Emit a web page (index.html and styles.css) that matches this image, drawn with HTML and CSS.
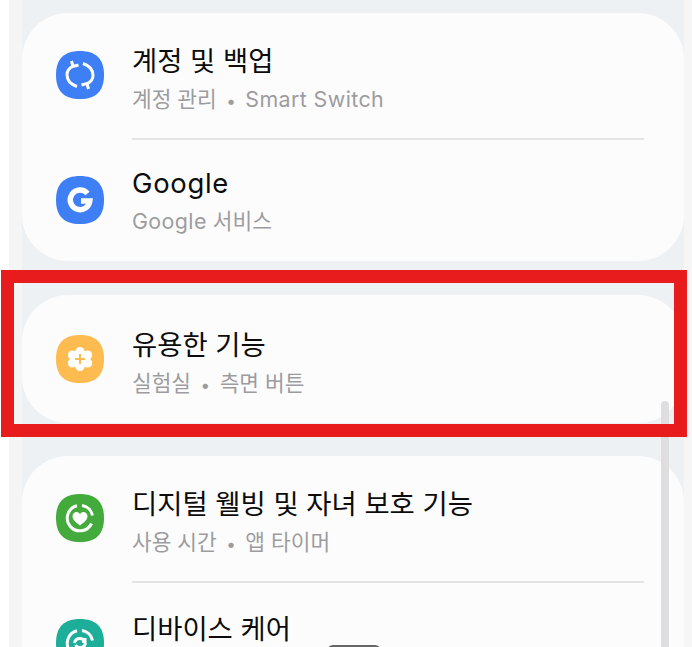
FILE: index.html
```html
<!DOCTYPE html>
<html lang="ko">

<head>
  <meta charset="UTF-8">
  <meta name="viewport" content="width=device-width, initial-scale=1.0">
  <title>설정</title>
  <link rel="stylesheet" href="styles.css">
</head>

<body>
  <div class="screen">
    <section class="card">
      <div class="row">
        <svg class="icon" viewBox="0 0 48 48">
          <path class="blue" d="M24 0C40 0 48 8 48 24C48 40 40 48 24 48C8 48 0 40 0 24C0 8 8 0 24 0Z" />
          <path class="line" d="M21 35.500C15 33.500 11 29 11 23.500C11 19.500 13.500 17 17 15M27 12.500C33 14.500 37 19 37 24.500C37 28.500 34.500 31 31 33" />
          <path class="line" d="M15.500 10L17 15.500L22.500 14M32.500 38L31 32.500L25.500 34" />
        </svg>
        <div class="text text-low">
          <div class="title">계정 및 백업</div>
          <div class="sub">계정 관리 <span class="dot">•</span> <span class="latin">Smart Switch</span></div>
        </div>
      </div>
      <div class="divider"></div>
      <div class="row row-short">
        <svg class="icon" viewBox="0 0 48 48">
          <path class="blue" d="M24 0C40 0 48 8 48 24C48 40 40 48 24 48C8 48 0 40 0 24C0 8 8 0 24 0Z" />
          <path class="g" d="M31.500 17.500A9.800 9.800 0 1 0 33.800 25H25" />
        </svg>
        <div class="text">
          <div class="title latin-title">Google</div>
          <div class="sub"><span class="latin">Google</span> 서비스</div>
        </div>
      </div>
    </section>

    <section class="card card-mid">
      <div class="row row-tall">
        <svg class="icon" viewBox="0 0 48 48">
          <path class="yellow" d="M24 0C40 0 48 8 48 24C48 40 40 48 24 48C8 48 0 40 0 24C0 8 8 0 24 0Z" />
          <g class="white">
            <circle cx="24" cy="24" r="9.500" />
            <circle cx="24" cy="16.500" r="4.500" />
            <circle cx="24" cy="31.500" r="4.500" />
            <circle cx="16.300" cy="20" r="4.500" />
            <circle cx="31.700" cy="20" r="4.500" />
            <circle cx="16.300" cy="28" r="4.500" />
            <circle cx="31.700" cy="28" r="4.500" />
          </g>
          <path class="plus" d="M24 19V29M19 24H29" />
        </svg>
        <div class="text text-lower">
          <div class="title">유용한 기능</div>
          <div class="sub">실험실 <span class="dot">•</span> 측면 버튼</div>
        </div>
      </div>
    </section>

    <section class="card">
      <div class="row">
        <svg class="icon" viewBox="0 0 48 48">
          <path class="green" d="M24 0C40 0 48 8 48 24C48 40 40 48 24 48C8 48 0 40 0 24C0 8 8 0 24 0Z" />
          <path class="ring" d="M26 11.500A12.700 12.700 0 0 1 36.500 21.500M35.500 29.500A12.700 12.700 0 1 1 21 11.800" />
          <path class="white" d="M24 31.500C20 28.500 16.500 25.800 16.500 22.300C16.500 19.800 18.400 18 20.500 18C22 18 23.200 18.700 24 20C24.800 18.700 26 18 27.500 18C29.600 18 31.500 19.800 31.500 22.300C31.500 25.800 28 28.500 24 31.500Z" />
        </svg>
        <div class="text text-low">
          <div class="title">디지털 웰빙 및 자녀 보호 기능</div>
          <div class="sub">사용 시간 <span class="dot">•</span> 앱 타이머</div>
        </div>
      </div>
      <div class="divider"></div>
      <div class="row row-last">
        <svg class="icon" viewBox="0 0 48 48">
          <path class="teal" d="M24 0C40 0 48 8 48 24C48 40 40 48 24 48C8 48 0 40 0 24C0 8 8 0 24 0Z" />
          <path class="ring" d="M26 11.500A12.700 12.700 0 0 1 36.500 21.500M35.500 29.500A12.700 12.700 0 1 1 21 11.800" />
          <path class="line" d="M18.500 24C19 21 21.500 19.500 24 19.500C26 19.500 27.500 20.500 28.500 22M29.500 24C29 27 26.500 28.500 24 28.500C22 28.500 20.500 27.500 19.500 26M26 22.500H29V19" />
        </svg>
        <div class="text text-top">
          <div class="title">디바이스 케어</div>
        </div>
      </div>
    </section>
  </div>

  <!-- things lying over the list -->
  <div class="scrollbar"></div>
  <div class="home-pill"></div>
  <div class="highlight"></div>
</body>

</html>
```

FILE: styles.css
```css
html,
body {
  height: 100%;
}

body {
  margin: 0;
  background-color: #fff;
  font-family: Inter, "Noto Sans CJK KR", sans-serif;
  overflow: hidden;
  position: relative;
}

.screen {
  margin-left: 22px;
  width: 662px;
  height: 647px;
  padding-top: 13px;
  box-sizing: border-box;
  background-color: #eef1f4;
  box-shadow: -13px 0 0 #f5f5f6, 8px 0 0 #f6f6f7;
  display: flex;
  flex-direction: column;
  gap: 33px;
  overflow: hidden;
}

.card {
  flex-shrink: 0;
  background-color: #fcfcfd;
  border-radius: 46px;
  padding: 0 40px 0 34px;
}

.card-mid {
  margin-top: 1px;
}

.row {
  display: flex;
  align-items: center;
  gap: 28px;
  height: 125px;
}

.row-short {
  height: 121px;
}

.row-tall {
  height: 128px;
}

.row-last {
  height: 120px;
}

.divider {
  height: 2px;
  margin-left: 76px;
  background-color: #e4e4e6;
}

.icon {
  width: 48px;
  height: 48px;
  flex-shrink: 0;
  margin-top: -1px;
}

.text {
  display: flex;
  flex-direction: column;
  gap: 5px;
}

/* first rows sit a bit lower than their icon */
.text-low {
  margin-top: 7px;
}

.text-lower {
  margin-top: 8px;
}

.text-top {
  margin-bottom: 28px;
}

.title {
  font-size: 27.400px;
  line-height: 36px;
  color: #0c0c0c;
}

.latin-title {
  letter-spacing: 0.700px;
}

.sub {
  font-size: 21.400px;
  line-height: 30px;
  color: #9c9c9f;
}

.latin {
  letter-spacing: 0.400px;
}

.dot {
  margin: 0 3.500px;
  font-size: 17px;
}

.blue {
  fill: #3e7ff5;
}

.yellow {
  fill: #fdbb50;
}

.green {
  fill: #43ab3c;
}

.teal {
  fill: #1cae98;
}

.white {
  fill: #fff;
}

.line,
.ring,
.g,
.plus {
  fill: none;
  stroke: #fff;
  stroke-width: 3;
}

.g {
  stroke-width: 5.500;
}

.plus {
  stroke: #fdbb50;
  stroke-width: 2;
}

.scrollbar {
  position: absolute;
  left: 661px;
  top: 401px;
  width: 8px;
  height: 260px;
  border-radius: 4px;
  background-color: #dedee1;
}

.home-pill {
  position: absolute;
  left: 327px;
  top: 645px;
  width: 54px;
  height: 12px;
  border-radius: 6px;
  background-color: #666;
}

.highlight {
  position: absolute;
  left: 1px;
  top: 270px;
  width: 686px;
  height: 167px;
  box-sizing: border-box;
  border: 13px solid #e81c1c;
}
```
